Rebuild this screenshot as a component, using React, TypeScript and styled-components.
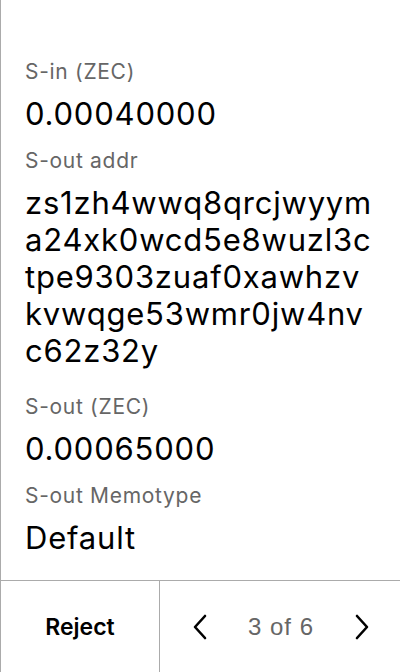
import React from "react";
import styled, { createGlobalStyle } from "styled-components";

const GlobalStyle = createGlobalStyle`
  html, body {
    margin: 0;
    padding: 0;
    background: #fff;
  }
  body {
    font-family: Inter, "Noto Sans", sans-serif;
    -webkit-font-smoothing: antialiased;
  }
`;

const Screen = styled.div`
  width: 400px;
  height: 672px;
  box-sizing: border-box;
  display: flex;
  flex-direction: column;
  border-left: 1px solid #ababab;
  background: #fff;
`;

const Fields = styled.div`
  flex: 1;
  padding: 59px 24px 0 24px;
  display: flex;
  flex-direction: column;
`;

const Field = styled.div<{ $long?: boolean }>`
  display: flex;
  flex-direction: column;
  margin-bottom: ${props => (props.$long ? 25 : 16)}px;
`;

const Label = styled.div`
  font-size: 21px;
  line-height: 26px;
  color: #666;
  letter-spacing: 0.7px;
`;

const Value = styled.div`
  font-size: 31px;
  line-height: 37px;
  color: #000;
  letter-spacing: 0.8px;
  margin-top: 10px;
  max-width: 350px;
  word-break: break-all;
`;

const Footer = styled.div`
  height: 92px;
  box-sizing: border-box;
  border-top: 1px solid #ababab;
  display: grid;
  grid-template-columns: 159px 1fr;
`;

const RejectButton = styled.button`
  border: none;
  border-right: 1px solid #ababab;
  background: transparent;
  font-family: Inter, sans-serif;
  font-weight: 600;
  font-size: 23px;
  color: #000;
  padding: 0;
  cursor: pointer;
`;

const Pager = styled.div`
  display: flex;
  align-items: center;
  justify-content: space-between;
  padding: 0 30px 0 32px;
`;

const Arrow = styled.button`
  border: none;
  background: transparent;
  padding: 0;
  width: 16px;
  height: 26px;
  display: flex;
  align-items: center;
  justify-content: center;
  cursor: pointer;
`;

const PageCount = styled.span`
  font-family: "Liberation Sans", Arial, sans-serif;
  font-size: 24px;
  color: #666;
  letter-spacing: 1px;
`;

const Chevron = ({ dir }: { dir: "left" | "right" }) => (
  <svg width="16" height="26" viewBox="0 0 16 26" fill="none">
    <path
      d={dir === "left" ? "M13 2 L3 13 L13 24" : "M3 2 L13 13 L3 24"}
      stroke="#000"
      strokeWidth="2.6"
      strokeLinecap="round"
      strokeLinejoin="round"
    />
  </svg>
);

const fields = [
  { label: "S-in (ZEC)", value: "0.00040000" },
  {
    label: "S-out addr",
    value:
      "zs1zh4wwq8qrcjwyyma24xk0wcd5e8wuzl3ctpe9303zuaf0xawhzvkvwqge53wmr0jw4nvc62z32y",
  },
  { label: "S-out (ZEC)", value: "0.00065000" },
  { label: "S-out Memotype", value: "Default" },
];

export default function App() {
  return (
    <>
      <GlobalStyle />
      <Screen>
        <Fields>
          {fields.map(f => (
            <Field key={f.label} $long={f.value.length > 20}>
              <Label>{f.label}</Label>
              <Value>{f.value}</Value>
            </Field>
          ))}
        </Fields>
        <Footer>
          <RejectButton>Reject</RejectButton>
          <Pager>
            <Arrow aria-label="Previous">
              <Chevron dir="left" />
            </Arrow>
            <PageCount>3 of 6</PageCount>
            <Arrow aria-label="Next">
              <Chevron dir="right" />
            </Arrow>
          </Pager>
        </Footer>
      </Screen>
    </>
  );
}
